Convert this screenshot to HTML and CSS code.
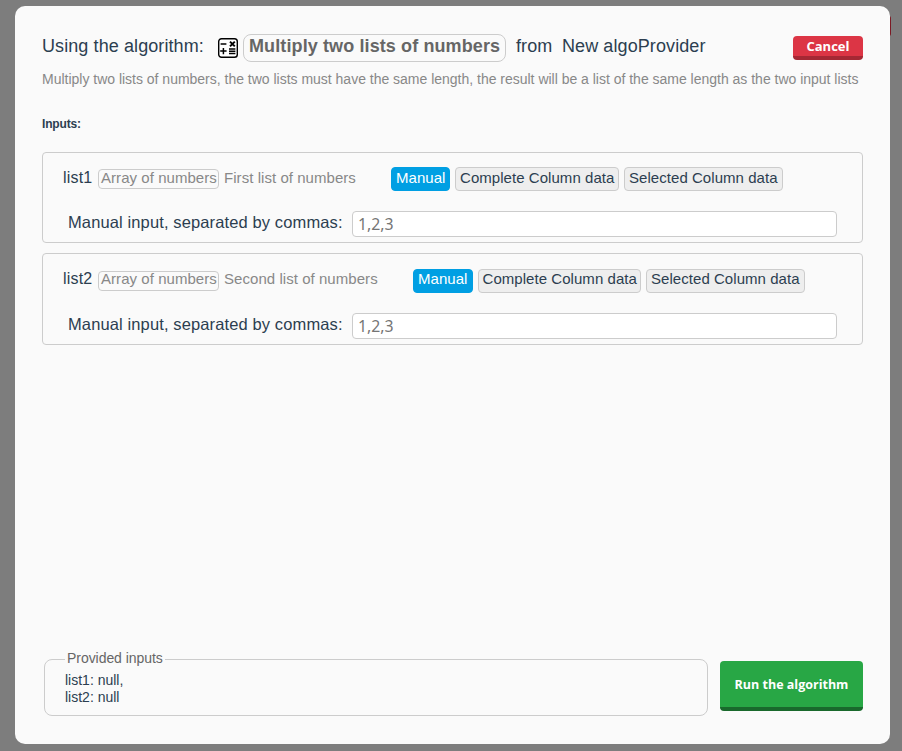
FILE: index.html
```html
<!DOCTYPE html>
<html lang="en">
<head>
<meta charset="utf-8">
<title>Run algorithm</title>
<link rel="stylesheet" href="styles.css">
</head>
<body>
<div class="behind"></div>
<main class="modal">
  <header class="header">
    <span class="lead">Using the algorithm:</span>
    <svg class="icon" viewBox="0 0 20 20" fill="none" stroke="#000">
      <rect x=".7" y=".7" width="18.6" height="18.6" rx="2.8" fill="#fff" stroke-width="1.4"/>
      <path d="M2.6 6H8.4M2.2 13.1H8.6M5.4 10V16.2M11 11H17.4M11 13.3H17.4M11 15.6H17.4" stroke-width="1.5"/>
      <path d="M12 3.6L16.8 8.4M16.8 3.6L12 8.4" stroke-width="2"/>
    </svg>
    <span class="algo">Multiply two lists of numbers</span>
    <span class="from">from</span>
    <span class="provider">New algoProvider</span>
    <button class="btn cancel">Cancel</button>
  </header>
  <p class="description">Multiply two lists of numbers, the two lists must have the same length, the result will be a list of the same length as the two input lists</p>
  <h2 class="heading">Inputs:</h2>
  <section class="card first">
    <div class="row">
      <span class="name">list1</span>
      <span class="type">Array of numbers</span>
      <span class="hint">First list of numbers</span>
      <div class="tabs">
        <span class="tab active">Manual</span>
        <span class="tab complete">Complete Column data</span>
        <span class="tab selected">Selected Column data</span>
      </div>
    </div>
    <label class="manual"><span class="label">Manual input, separated by commas:</span><input class="field" placeholder="1,2,3"></label>
  </section>
  <section class="card second">
    <div class="row">
      <span class="name">list2</span>
      <span class="type">Array of numbers</span>
      <span class="hint wide">Second list of numbers</span>
      <div class="tabs">
        <span class="tab active">Manual</span>
        <span class="tab complete">Complete Column data</span>
        <span class="tab selected">Selected Column data</span>
      </div>
    </div>
    <label class="manual"><span class="label">Manual input, separated by commas:</span><input class="field" placeholder="1,2,3"></label>
  </section>
  <footer class="footer">
    <fieldset class="provided">
      <legend>Provided inputs</legend>
      <div>list1: null,</div>
      <div>list2: null</div>
    </fieldset>
    <button class="btn run">Run the algorithm</button>
  </footer>
</main>
</body>
</html>
```
FILE: styles.css
```css
* { box-sizing: border-box; }
body {
  margin: 0;
  height: 751px;
  padding: 6px 12px 7px 15px;
  overflow: hidden;
  background: #7d7d7d;
  color: #2c3e50;
  font-family: "Liberation Sans", sans-serif;
}
.behind {
  position: absolute;
  left: 870px;
  top: 16px;
  width: 21px;
  height: 20px;
  border-radius: 2px;
  background: #7c1a24;
}
.modal {
  position: relative;
  display: flex;
  flex-direction: column;
  width: 875px;
  height: 738px;
  padding: 28px 27px;
  border-radius: 10px;
  background: #fafafa;
}
.header {
  display: flex;
  height: 28px;
  font-size: 18px;
  line-height: 24px;
  letter-spacing: .09px;
  white-space: nowrap;
}
.lead { width: 176px; }
.icon { width: 20px; height: 20px; margin: 4px 5px 0 0; }
.algo {
  width: 263px;
  padding-left: 5px;
  border: 1px solid #ccc;
  border-radius: 8px;
  color: #666;
  font-weight: bold;
  line-height: 22px;
  letter-spacing: .11px;
}
.from { width: 46px; margin-left: 10px; }
.btn {
  border: 0;
  border-radius: 4px;
  padding: 0;
  color: #fff;
  font: bold 13px "Open Sans", sans-serif;
}
.cancel {
  width: 70px;
  height: 24px;
  margin: 2px 0 0 auto;
  border-bottom: 4px solid #a52834;
  background: #dc3545;
}
.description {
  margin: 9px 0 0;
  height: 17px;
  color: #888;
  font-size: 14px;
  line-height: 17px;
  letter-spacing: -.01px;
  white-space: nowrap;
}
.heading {
  margin: 29px 0 0;
  height: 14px;
  font-size: 12px;
  line-height: 14px;
  letter-spacing: -.15px;
}
.card {
  height: 91px;
  padding: 14px 25px 0 20px;
  border: 1px solid #ccc;
  border-radius: 4px;
}
.first { margin-top: 21px; }
.second { height: 92px; margin-top: 10px; padding-top: 15px; }
.row {
  display: flex;
  height: 24px;
  font-size: 15px;
  letter-spacing: .05px;
  white-space: nowrap;
}
.name { width: 35px; font-size: 16px; line-height: 21px; letter-spacing: .2px; }
.type {
  width: 121px;
  height: 20px;
  margin: 2px 5px 0 0;
  padding-left: 2px;
  border: 1px solid #ccc;
  border-radius: 4px;
  color: #888;
  line-height: 16px;
}
.hint { width: 167px; color: #888; line-height: 22px; }
.hint.wide { width: 189px; }
.tabs { display: flex; gap: 5px; }
.tab {
  height: 24px;
  padding-left: 4px;
  border: 1px solid #ccc;
  border-radius: 4px;
  background: #eee;
  line-height: 20px;
}
.active { width: 59px; border-color: #009fe3; background: #009fe3; color: #fff; }
.complete { width: 164px; }
.selected { width: 159px; }
.second .active { width: 60px; }
.second .complete { width: 163px; padding-left: 3.5px; }
.second .name { line-height: 20px; }
.second .type { line-height: 14px; }
.second .hint { line-height: 20px; }
.second .tab { line-height: 18px; }
.manual { display: flex; margin: 20px 0 0 5px; font-size: 16px; }
.label { width: 284px; font-size: 16.5px; line-height: 23px; letter-spacing: .12px; white-space: nowrap; }
.field {
  width: 485px;
  height: 26px;
  padding: 0 5px;
  border: 1px solid #ccc;
  border-radius: 4px;
  background: #fff;
  font: 15.8px "Noto Sans", sans-serif;
}
.field::placeholder { color: #757575; }
.footer {
  display: flex;
  align-items: flex-end;
  height: 66px;
  margin-top: auto;
}
.provided {
  width: 664px;
  height: 65px;
  margin: 0 12px 0 2px;
  padding: 5px 20px 0;
  border: 1px solid #ccc;
  border-radius: 8px;
  font-size: 14px;
  line-height: 17px;
}
.provided legend { height: 16px; padding: 0 2px; color: #666; line-height: 15px; letter-spacing: -.05px; }
.run {
  width: 143px;
  height: 50px;
  margin-bottom: 5px;
  border-bottom: 4px solid #19692c;
  background: #28a745;
  font-size: 12.5px;
}
```
